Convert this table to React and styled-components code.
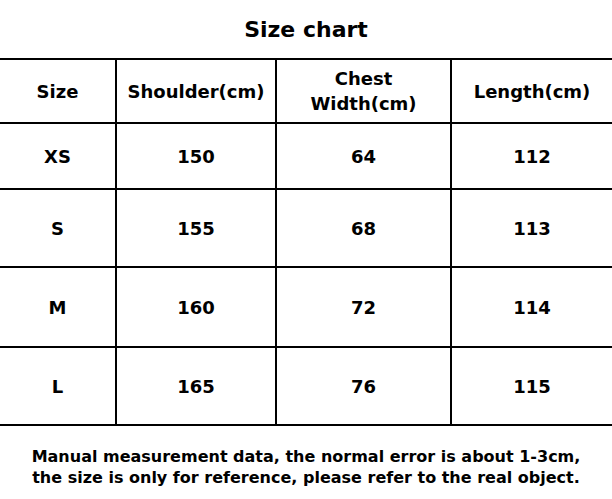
import React from "react";
import styled, { createGlobalStyle } from "styled-components";

const rows = [
  { size: "XS", shoulder: 150, chest: 64, length: 112, h: 64 },
  { size: "S", shoulder: 155, chest: 68, length: 113, h: 76 },
  { size: "M", shoulder: 160, chest: 72, length: 114, h: 78 },
  { size: "L", shoulder: 165, chest: 76, length: 115, h: 76 },
];

const SizeChart = () => {
  return (
    <Page>
      <Title>Size chart</Title>
      <Table>
        <Row $h={62}>
          <Cell>Size</Cell>
          <Cell>Shoulder(cm)</Cell>
          <Cell>
            Chest
            <br />
            Width(cm)
          </Cell>
          <Cell $last>Length(cm)</Cell>
        </Row>
        {rows.map((r) => (
          <Row key={r.size} $h={r.h}>
            <Cell>{r.size}</Cell>
            <Cell>{r.shoulder}</Cell>
            <Cell>{r.chest}</Cell>
            <Cell $last>{r.length}</Cell>
          </Row>
        ))}
      </Table>
      <Note>
        Manual measurement data, the normal error is about 1-3cm,
        <br />
        the size is only for reference, please refer to the real object.
      </Note>
    </Page>
  );
};

const GlobalStyle = createGlobalStyle`
  html, body {
    margin: 0;
    padding: 0;
    background: #fff;
  }
`;

const Page = styled.div`
  /* p  */
  width: 612px;
  height: 499px;
  background: #fff;
  color: #000;
  font-family: "DejaVu Sans", Verdana, sans-serif;
  font-weight: bold;
  overflow: hidden;
`;

const Title = styled.h1`
  margin: 0;
  padding-top: 2px;
  height: 56px;
  line-height: 56px;
  font-size: 22px;
  text-align: center;
`;

const Table = styled.div`
  border-top: 2px solid #000;
`;

const Row = styled.div`
  display: grid;
  grid-template-columns: 117px 160px 175px 1fr;
  height: ${(p) => p.$h}px;
  border-bottom: 2px solid #000;
`;

const Cell = styled.div`
  display: flex;
  align-items: center;
  justify-content: center;
  text-align: center;
  font-size: 18px;
  line-height: 25px;
  border-right: ${(p) => (p.$last ? "none" : "2px solid #000")};
`;

const Note = styled.p`
  margin: 0;
  padding-top: 20px;
  font-size: 16px;
  line-height: 21px;
  text-align: center;
`;

export default function App() {
  return (
    <>
      <GlobalStyle />
      <SizeChart />
    </>
  );
}
